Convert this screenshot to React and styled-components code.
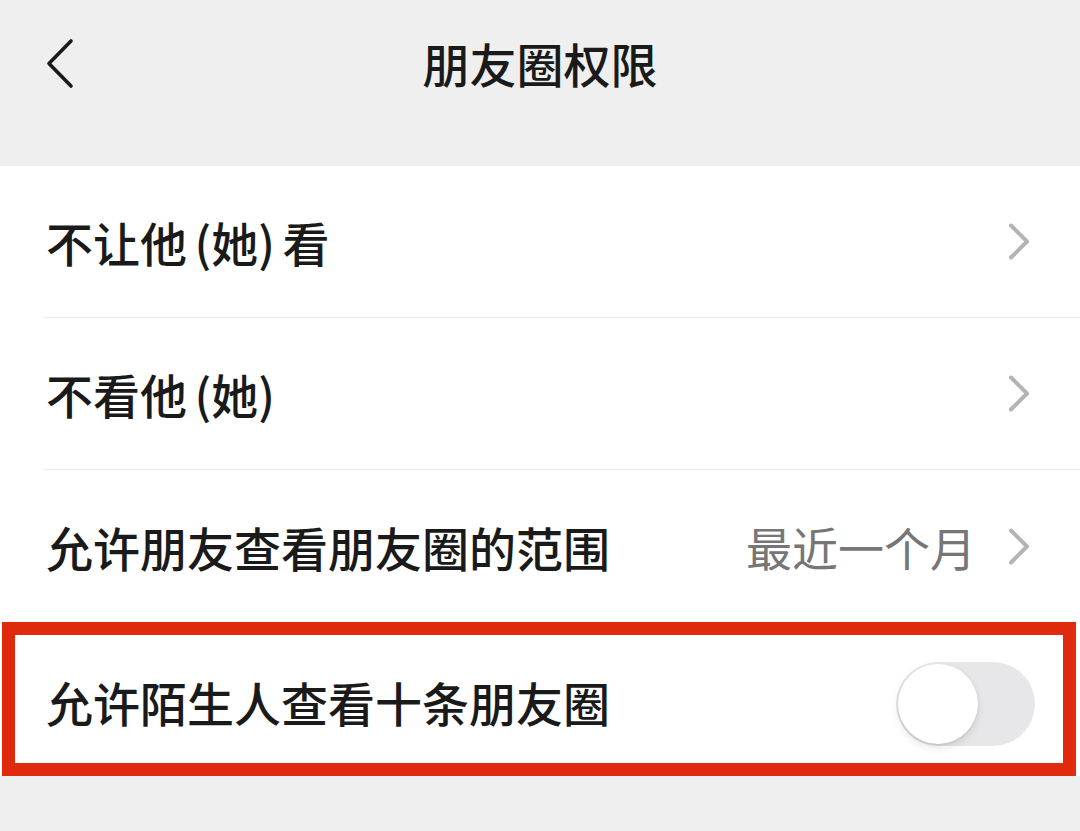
import React from 'react';
import styled, { createGlobalStyle } from 'styled-components';

const GlobalStyle = createGlobalStyle`
  html, body {
    margin: 0;
    padding: 0;
    background-color: #efefef;
  }
  body {
    font-family: 'Noto Sans CJK SC', 'Noto Sans', sans-serif;
    color: #1a1a1a;
  }
`;

const Page = styled.div`
  width: 1080px;
  height: 831px;
  background-color: #efefef;
  overflow: hidden;
`;

const Header = styled.header`
  position: relative;
  height: 124px;
  padding-bottom: 42px;
  display: flex;
  align-items: center;
  justify-content: center;
`;

const BackButton = styled.button`
  position: absolute;
  left: 45px;
  top: 38px;
  width: 30px;
  height: 51px;
  padding: 0;
  background: transparent;
  border: none;
  display: flex;
  align-items: center;
  justify-content: center;
`;

const Title = styled.h1`
  margin: 0;
  font-size: 47px;
  font-weight: 500;
  line-height: 1;
  color: #1a1a1a;
`;

const Section = styled.section`
  background-color: #ffffff;
`;

const Row = styled.div`
  height: ${(p) => (p.last ? '152px' : '151px')};
  margin-left: 44px;
  padding: 0 50px 0 2px;
  display: flex;
  align-items: center;
  border-bottom: ${(p) => (p.last ? 'none' : '1px solid #e9e9e9')};
`;

const HighlightRow = styled.div`
  height: 128px;
  margin: 0 4px 0 2px;
  padding: 0 28px 0 31px;
  display: flex;
  align-items: center;
  border: 13px solid #e02a0e;
  background-color: #ffffff;
`;

const Label = styled.span`
  flex: 1;
  font-size: 47px;
  font-weight: 500;
  color: #1a1a1a;
  line-height: 1;
  word-spacing: -3px;
  padding-top: ${(p) => (p.boxed ? '4px' : '0')};
`;

const Value = styled.span`
  font-size: 46px;
  color: #767676;
  margin-right: 32px;
  line-height: 1;
`;

const Track = styled.div`
  position: relative;
  width: 139px;
  height: 84px;
  margin-top: 10px;
  border-radius: 42px;
  background-color: #e7e7e9;
`;

const Knob = styled.div`
  position: absolute;
  left: 2px;
  top: 2px;
  width: 80px;
  height: 80px;
  border-radius: 50%;
  background-color: #ffffff;
  box-shadow: 0 1px 2px rgba(0, 0, 0, 0.12), 0 4px 8px rgba(0, 0, 0, 0.1);
`;

const Chevron = () => (
  <svg width="22" height="37" viewBox="0 0 22 37" fill="none">
    <path d="M3 2.5 L19 18.5 L3 34.5" stroke="#b4b4b4" strokeWidth="4" strokeLinecap="round" strokeLinejoin="round" />
  </svg>
);

const BackIcon = () => (
  <svg width="28" height="51" viewBox="0 0 28 51" fill="none">
    <path d="M25 3 L3 25.5 L25 48" stroke="#1a1a1a" strokeWidth="3.6" strokeLinecap="round" strokeLinejoin="round" />
  </svg>
);

const Switch = ({ on }) => (
  <Track>
    <Knob style={on ? { left: '57px' } : undefined} />
  </Track>
);

const rows = [
  { id: 1, label: '不让他 (她) 看' },
  { id: 2, label: '不看他 (她)' },
  { id: 3, label: '允许朋友查看朋友圈的范围', value: '最近一个月', last: true },
];

const App = () => (
  <Page>
    <GlobalStyle />
    <Header>
      <BackButton aria-label="返回">
        <BackIcon />
      </BackButton>
      <Title>朋友圈权限</Title>
    </Header>
    <Section>
      {rows.map((row) => (
        <Row key={row.id} last={row.last}>
          <Label>{row.label}</Label>
          {row.value && <Value>{row.value}</Value>}
          <Chevron />
        </Row>
      ))}
      <HighlightRow>
        <Label boxed>允许陌生人查看十条朋友圈</Label>
        <Switch on={false} />
      </HighlightRow>
    </Section>
  </Page>
);

export default App;
